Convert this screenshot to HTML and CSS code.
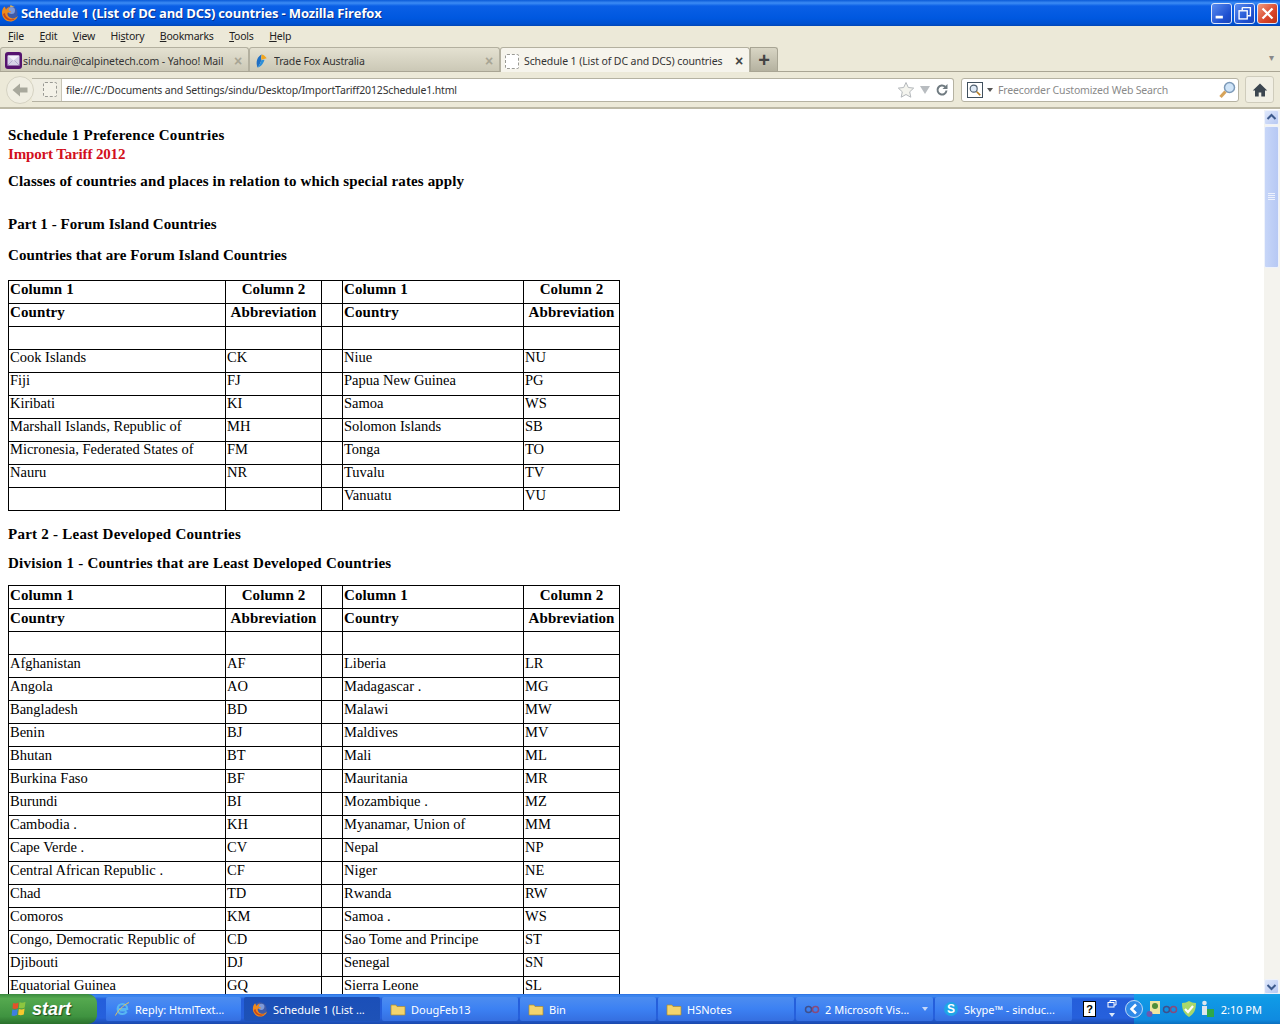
FILE: index.html
```html
<!DOCTYPE html>
<html lang="en">
<head>
<meta charset="utf-8">
<title>Schedule 1 (List of DC and DCS) countries - Mozilla Firefox</title>
<link rel="stylesheet" href="styles.css">
</head>
<body>
<div class="window">
  <header class="titlebar">
    <svg class="title-icon" viewBox="0 0 18 18" width="18" height="18"><circle cx="9" cy="9" r="7.500" fill="#3e5aa8"/><circle cx="10.500" cy="6.500" r="3.500" fill="#7f9ad8"/><path d="M3.500 2.500C1.500 4.500.8 7 1 9.500c.4 4.500 4 8 8.300 8 3.800 0 6.800-2.500 7.700-6-1.500 2.200-4.500 3.500-7 2.600C7.500 13.300 6 11 6.500 9c1-1 2.500-1 3.500-.5.200-1.200-1-2-2.500-2 0-1.500.5-2.800 2-3.800-2 .2-3.700 1.300-4.500 3-.5-1-.8-2.200-1.500-3.200z" fill="#ee8a1d"/><path d="M2 10c.8 3.500 3.800 6.500 7.500 6.500 2 0 3.800-.8 5-2-2.500 1.200-5.500 1-7.500-.5C5.200 12.700 4 11 4 9z" fill="#c9471a"/><path d="M9 1.500c2 0 3.500.5 5 1.700-1.500-.5-3-.5-4.500 0z" fill="#f6c24a"/></svg>
    <span class="title-text">Schedule 1 (List of DC and DCS) countries - Mozilla Firefox</span>
    <div class="winbtns">
      <span class="winbtn"><svg viewBox="0 0 21 21" width="19" height="19"><rect x="4" y="13" width="8" height="3" fill="#fff"/></svg></span>
      <span class="winbtn"><svg viewBox="0 0 21 21" width="19" height="19"><path d="M8 4h9v9h-3M8 4v3" fill="none" stroke="#fff" stroke-width="1.5"/><rect x="4.500" y="7.500" width="9" height="9" fill="none" stroke="#fff" stroke-width="1.500"/></svg></span>
      <span class="winbtn winbtn-close"><svg viewBox="0 0 21 21" width="19" height="19"><path d="M5 5l11 11M16 5L5 16" stroke="#fff" stroke-width="2.500"/></svg></span>
    </div>
  </header>

  <nav class="menubar">
    <span><u>F</u>ile</span><span><u>E</u>dit</span><span><u>V</u>iew</span><span>Hi<u>s</u>tory</span><span><u>B</u>ookmarks</span><span><u>T</u>ools</span><span><u>H</u>elp</span>
  </nav>

  <div class="tabbar">
    <div class="tab tab-one">
      <svg viewBox="0 0 17 17" width="17" height="17"><rect x="0" y="0" width="17" height="17" rx="3" fill="#55136e"/><rect x="2.500" y="3.500" width="12" height="10" rx="1" fill="#d6d2e8"/><path d="M2.500 3.500l6 5 6-5z" fill="#f4f2fa"/><path d="M2.500 13.500l5-5M14.500 13.500l-5-5" stroke="#a49cc4" stroke-width=".8"/></svg>
      <span class="tab-label">sindu.nair@calpinetech.com - Yahoo! Mail</span><span class="tab-x tab-x-dim">×</span>
    </div>
    <div class="tab tab-two">
      <svg viewBox="0 0 16 18" width="14" height="17"><path d="M9 2C4 4 1.500 10 4 17c1.500-1.500 3.500-5 4.500-8.500C8 6 8 4 9 2z" fill="#1f6fc4"/><path d="M9 2c-.8 2-.8 4-.5 6l6-1.500C13.500 4.500 11.500 2.500 9 2z" fill="#f2a51d"/><path d="M8.500 8.500C7.500 12 5.500 15.500 4 17c4-1 7-5 8-9z" fill="#2d8fd8"/></svg>
      <span class="tab-label">Trade Fox Australia</span><span class="tab-x tab-x-dim">×</span>
    </div>
    <div class="tab tab-active">
      <span class="page-icon"></span>
      <span class="tab-label">Schedule 1 (List of DC and DCS) countries</span><span class="tab-x">×</span>
    </div>
    <div class="tab-new">+</div>
    <span class="tab-list">▾</span>
  </div>

  <div class="navbar">
    <span class="back-btn"><svg viewBox="0 0 20 20" width="20" height="20"><path d="M2.500 10l7.500-6.500V7.500h7.500v5H10v4z" fill="#a8a89c"/></svg></span>
    <div class="urlbar">
      <span class="identity"><span class="page-icon"></span></span>
      <div class="url-field">
        <span class="url-text">file:///C:/Documents and Settings/sindu/Desktop/ImportTariff2012Schedule1.html</span>
        <svg class="star" viewBox="0 0 18 18" width="18" height="18"><path d="M9 1.500l2.300 5 5.400.600-4 3.700 1.100 5.400L9 13.500l-4.800 2.700 1.100-5.400-4-3.700 5.400-.6z" fill="#f4f4ee" stroke="#b4b8bc"/></svg>
        <span class="url-drop"></span>
        <svg class="reload" viewBox="0 0 14 14" width="14" height="14"><path d="M11.500 7.500a4.500 4.500 0 1 1-1.300-3.700" fill="none" stroke="#6f7a80" stroke-width="2"/><path d="M12.500 1v5h-5z" fill="#6f7a80"/></svg>
      </div>
    </div>
    <div class="searchbar">
      <span class="search-engine"><svg viewBox="0 0 16 16" width="14" height="14"><circle cx="6.500" cy="6.500" r="4" fill="#dfeaf6" stroke="#506070" stroke-width="1.300"/><path d="M10 10l4 4" stroke="#b47a1e" stroke-width="2"/></svg></span>
      <span class="search-drop"></span>
      <span class="search-text">Freecorder Customized Web Search</span>
      <svg class="search-go" viewBox="0 0 18 18" width="18" height="18"><circle cx="11.500" cy="6.500" r="5" fill="#cfe4f8" stroke="#7d9ab8" stroke-width="1.500"/><path d="M7.500 10.500L2.500 16" stroke="#d6a35a" stroke-width="3.200"/></svg>
    </div>
    <span class="home-btn"><svg viewBox="0 0 16 16" width="16" height="16"><path d="M8 1.500L.8 8.500h2.200v6h3.700v-4h2.600v4H13v-6h2.200z" fill="#3c4650"/></svg></span>
  </div>

  <div class="viewport">
    <main class="page">
      <p class="h h-first">Schedule 1 Preference Countries</p>
      <p class="h h-red">Import Tariff 2012</p>
      <p class="h h-classes">Classes of countries and places in relation to which special rates apply</p>
      <p class="h h-part1">Part 1 - Forum Island Countries</p>
      <p class="h h-sub1">Countries that are Forum Island Countries</p>
      <table class="tariff">
        <colgroup><col class="c1"><col class="c2"><col class="c3"><col class="c4"><col class="c5"></colgroup>
        <tr class="hd"><td>Column 1</td><td class="ctr">Column 2</td><td></td><td>Column 1</td><td class="ctr">Column 2</td></tr>
        <tr class="hd"><td>Country</td><td class="ctr">Abbreviation</td><td></td><td>Country</td><td class="ctr">Abbreviation</td></tr>
        <tr><td></td><td></td><td></td><td></td><td></td></tr>
        <tr><td>Cook Islands</td><td>CK</td><td></td><td>Niue</td><td>NU</td></tr>
        <tr><td>Fiji</td><td>FJ</td><td></td><td>Papua New Guinea</td><td>PG</td></tr>
        <tr><td>Kiribati</td><td>KI</td><td></td><td>Samoa</td><td>WS</td></tr>
        <tr><td>Marshall Islands, Republic of</td><td>MH</td><td></td><td>Solomon Islands</td><td>SB</td></tr>
        <tr><td>Micronesia, Federated States of</td><td>FM</td><td></td><td>Tonga</td><td>TO</td></tr>
        <tr><td>Nauru</td><td>NR</td><td></td><td>Tuvalu</td><td>TV</td></tr>
        <tr><td></td><td></td><td></td><td>Vanuatu</td><td>VU</td></tr>
      </table>
      <p class="h h-part2">Part 2 - Least Developed Countries</p>
      <p class="h h-sub2">Division 1 - Countries that are Least Developed Countries</p>
      <table class="tariff">
        <colgroup><col class="c1"><col class="c2"><col class="c3"><col class="c4"><col class="c5"></colgroup>
        <tr class="hd"><td>Column 1</td><td class="ctr">Column 2</td><td></td><td>Column 1</td><td class="ctr">Column 2</td></tr>
        <tr class="hd"><td>Country</td><td class="ctr">Abbreviation</td><td></td><td>Country</td><td class="ctr">Abbreviation</td></tr>
        <tr><td></td><td></td><td></td><td></td><td></td></tr>
        <tr><td>Afghanistan</td><td>AF</td><td></td><td>Liberia</td><td>LR</td></tr>
        <tr><td>Angola</td><td>AO</td><td></td><td>Madagascar .</td><td>MG</td></tr>
        <tr><td>Bangladesh</td><td>BD</td><td></td><td>Malawi</td><td>MW</td></tr>
        <tr><td>Benin</td><td>BJ</td><td></td><td>Maldives</td><td>MV</td></tr>
        <tr><td>Bhutan</td><td>BT</td><td></td><td>Mali</td><td>ML</td></tr>
        <tr><td>Burkina Faso</td><td>BF</td><td></td><td>Mauritania</td><td>MR</td></tr>
        <tr><td>Burundi</td><td>BI</td><td></td><td>Mozambique .</td><td>MZ</td></tr>
        <tr><td>Cambodia .</td><td>KH</td><td></td><td>Myanamar, Union of</td><td>MM</td></tr>
        <tr><td>Cape Verde .</td><td>CV</td><td></td><td>Nepal</td><td>NP</td></tr>
        <tr><td>Central African Republic .</td><td>CF</td><td></td><td>Niger</td><td>NE</td></tr>
        <tr><td>Chad</td><td>TD</td><td></td><td>Rwanda</td><td>RW</td></tr>
        <tr><td>Comoros</td><td>KM</td><td></td><td>Samoa .</td><td>WS</td></tr>
        <tr><td>Congo, Democratic Republic of</td><td>CD</td><td></td><td>Sao Tome and Principe</td><td>ST</td></tr>
        <tr><td>Djibouti</td><td>DJ</td><td></td><td>Senegal</td><td>SN</td></tr>
        <tr><td>Equatorial Guinea</td><td>GQ</td><td></td><td>Sierra Leone</td><td>SL</td></tr>
      </table>
    </main>
    <aside class="scrollbar">
      <span class="sb-btn"><svg viewBox="0 0 15 15" width="15" height="15"><path d="M3.500 9l4-4 4 4" fill="none" stroke="#3d5a8c" stroke-width="2"/></svg></span>
      <span class="sb-thumb"><span class="sb-grip"></span></span>
      <span class="sb-fill"></span>
      <span class="sb-btn"><svg viewBox="0 0 15 15" width="15" height="15"><path d="M3.500 6l4 4 4-4" fill="none" stroke="#3d5a8c" stroke-width="2"/></svg></span>
    </aside>
  </div>

  <footer class="taskbar">
    <div class="start">
      <svg viewBox="0 0 18 18" width="18" height="18"><path d="M3 3c2 .8 3.500.5 5.500-.5L8 8c-2 1-3.500 1.200-5.500.5z" fill="#e4512a"/><path d="M9.500 2.200c2 .8 4 .6 6-.4l-.8 5.700c-2 1-4 1.100-5.900.4z" fill="#8cc63f"/><path d="M2.300 9.600c2 .7 3.500.5 5.500-.5l-.7 6c-2 1-3.500 1-5.500.3z" fill="#3f7fe0"/><path d="M8.800 9c2 .7 4 .6 5.800-.4l-.8 5.800c-2 1-3.800 1-5.700.4z" fill="#f8c82e"/></svg>
      <span class="start-text">start</span>
    </div>
    <div class="task task-reply">
      <svg viewBox="0 0 16 16" width="16" height="16"><path d="M12.500 9.500H6M4 8h9.200c0-3-2.200-5-4.700-5S3.700 5 3.700 8s2 5 4.700 5c2 0 3.400-.9 4.300-2.500" fill="none" stroke="#58b6f2" stroke-width="2.200"/><path d="M1.500 14.500C3 11 9 4 15 1.500" fill="none" stroke="#e6c25a" stroke-width="1"/></svg>
      <span class="task-label">Reply: HtmlText...</span>
    </div>
    <div class="task task-active task-sched">
      <svg viewBox="0 0 18 18" width="16" height="16"><circle cx="9" cy="9" r="7.500" fill="#3e5aa8"/><circle cx="10.500" cy="6.500" r="3.500" fill="#7f9ad8"/><path d="M3.500 2.500C1.500 4.500.8 7 1 9.500c.4 4.500 4 8 8.300 8 3.800 0 6.800-2.500 7.700-6-1.500 2.200-4.500 3.500-7 2.600C7.500 13.300 6 11 6.500 9c1-1 2.500-1 3.500-.5.200-1.200-1-2-2.500-2 0-1.500.5-2.800 2-3.800-2 .2-3.700 1.300-4.500 3-.5-1-.8-2.200-1.500-3.200z" fill="#ee8a1d"/><path d="M2 10c.8 3.500 3.800 6.500 7.500 6.500 2 0 3.800-.8 5-2-2.500 1.200-5.500 1-7.500-.5C5.200 12.700 4 11 4 9z" fill="#c9471a"/></svg>
      <span class="task-label">Schedule 1 (List ...</span>
    </div>
    <div class="task task-doug">
      <svg viewBox="0 0 16 16" width="16" height="16"><path d="M1 4h5l1 1.500h8V14H1z" fill="#f3d46e" stroke="#b08d2c" stroke-width=".7"/></svg>
      <span class="task-label">DougFeb13</span>
    </div>
    <div class="task task-bin">
      <svg viewBox="0 0 16 16" width="16" height="16"><path d="M1 4h5l1 1.500h8V14H1z" fill="#f3d46e" stroke="#b08d2c" stroke-width=".7"/></svg>
      <span class="task-label">Bin</span>
    </div>
    <div class="task task-hs">
      <svg viewBox="0 0 16 16" width="16" height="16"><path d="M1 4h5l1 1.500h8V14H1z" fill="#f3d46e" stroke="#b08d2c" stroke-width=".7"/></svg>
      <span class="task-label">HSNotes</span>
    </div>
    <div class="task task-vis">
      <svg viewBox="0 0 16 16" width="16" height="16"><circle cx="4.500" cy="8.500" r="3" fill="none" stroke="#3f4f8a" stroke-width="1.500"/><circle cx="11.500" cy="8.500" r="3" fill="none" stroke="#8a4a7a" stroke-width="1.500"/></svg>
      <span class="task-label">2 Microsoft Vis...</span>
      <span class="task-arrow"></span>
    </div>
    <div class="task task-skype">
      <svg viewBox="0 0 16 16" width="16" height="16"><circle cx="8" cy="8" r="7" fill="#1fa5e6"/><text class="skype-s" x="8" y="12" text-anchor="middle">S</text></svg>
      <span class="task-label">Skype™ - sinduc...</span>
    </div>
    <div class="quick">
      <span class="help-ico">?</span>
      <span class="quick-toggle"><svg viewBox="0 0 12 22" width="12" height="22"><path d="M4 2.500h6v4.500H8M4 2.500v1.500" fill="none" stroke="#fff"/><rect x="2" y="4.500" width="6" height="4.500" fill="none" stroke="#fff"/><path d="M3 15h6l-3 4z" fill="#dbe8fb"/></svg></span>
    </div>
    <div class="tray">
      <span class="tray-chev"><svg viewBox="0 0 18 18" width="18" height="18"><circle cx="9" cy="9" r="8.500" fill="#2f8ae8" stroke="#bcd8f8"/><path d="M11 4.500L6.500 9l4.500 4.500" fill="none" stroke="#fff" stroke-width="2.500"/></svg></span>
      <svg viewBox="0 0 16 18" width="16" height="18"><rect x="4" y="1" width="10" height="13" fill="#efe6a0"/><circle cx="9" cy="6" r="3" fill="#4f8f3a"/><circle cx="3.500" cy="14" r="3" fill="#6a5ab0"/></svg>
      <svg viewBox="0 0 16 16" width="16" height="16"><circle cx="4.500" cy="8.500" r="3" fill="none" stroke="#3f4f8a" stroke-width="1.500"/><circle cx="11.500" cy="8.500" r="3" fill="none" stroke="#8a4a7a" stroke-width="1.500"/></svg>
      <svg class="tray-shield" viewBox="0 0 18 18" width="18" height="18"><path d="M2 3c3 0 5-1 7-2 2 1 4 2 7 2 0 7-2 11-7 14C4 14 2 10 2 3z" fill="#a9d86a"/><path d="M5 9l3 3 5-6" fill="none" stroke="#fff" stroke-width="2.200"/></svg>
      <svg class="tray-user" viewBox="0 0 14 18" width="14" height="18"><circle cx="4.500" cy="3" r="2.300" fill="#dde6ee"/><rect x="2" y="6" width="5" height="9" fill="#dde6ee"/><rect x="7" y="9" width="7" height="8" fill="#2ea84a"/></svg>
      <span class="clock">2:10 PM</span>
    </div>
  </footer>
</div>
</body>
</html>
```
FILE: styles.css
```css
* { box-sizing: border-box; }
html, body { margin: 0; padding: 0; height: 100%; overflow: hidden; }
.window { width: 1280px; height: 1024px; display: flex; flex-direction: column; background: #ece9d8; font-family: "Noto Sans", "Liberation Sans", sans-serif; font-size: 10.500px; letter-spacing: -.16px; color: #111; }

.titlebar { height: 26px; flex: none; display: flex; align-items: center; padding: 0 2px 0 1px; background: linear-gradient(#0a5ad8 0, #3c8cf4 3px, #0a5fe6 6px, #0058e0 18px, #0050d0 24px, #0346b4 26px); }
.title-icon { flex: none; }
.title-text { margin-left: 2px; color: #fff; font: bold 13px "Open Sans", "Liberation Sans", sans-serif; letter-spacing: -.16px; text-shadow: 1px 1px 0 #0a2f8c; white-space: nowrap; }
.winbtns { margin-left: auto; display: flex; gap: 2px; }
.winbtn { width: 21px; height: 21px; display: flex; align-items: center; justify-content: center; border: 1px solid #dfe8fa; border-radius: 3px; background: linear-gradient(135deg, #5a8cf0, #1d4fd0 70%, #1a45b8); }
.winbtn-close { background: linear-gradient(135deg, #ef9a7e, #d9452a 60%, #bb3115); }

.menubar { height: 22px; flex: none; display: flex; align-items: center; padding: 0 0 2px 8px; gap: 15.500px; color: #222; letter-spacing: -.22px; }
.menubar u { text-decoration: underline; }

.tabbar { height: 24px; flex: none; display: flex; align-items: flex-end; border-bottom: 1px solid #a9a594; position: relative; }
.tab { height: 24px; display: flex; align-items: center; gap: 2px; padding: 2px 4px 0 4px; border: 1px solid #b3b09f; border-bottom: none; border-radius: 3px 3px 0 0; background: linear-gradient(#e4e1d1, #cbc8b6); white-space: nowrap; color: #333; }
.tab-one { width: 249px; letter-spacing: -.12px; }
.tab-one .tab-label { margin-left: -1px; }
.tab-two { width: 251px; }
.tab-two .tab-label { margin-left: 4px; }
.tab-active { width: 250px; height: 25px; margin-bottom: -1px; background: #f6f4ec; position: relative; letter-spacing: -.1px; }
.tab-active .tab-label { margin-left: 3px; }
.tab-label { flex: 1; min-width: 0; overflow: hidden; }
.tab-x { flex: none; font: bold 14px "Liberation Sans", sans-serif; color: #444; width: 12px; text-align: center; }
.tab-x-dim { color: #a8a594; }
.tab-new { width: 28px; height: 24px; display: flex; align-items: center; justify-content: center; border: 1px solid #a8a594; border-bottom: none; border-radius: 0 3px 0 0; background: linear-gradient(#d8d5c4, #b5b2a0); font: bold 20px "Liberation Sans", sans-serif; color: #444; line-height: 1; }
.tab-list { margin-left: auto; margin-right: 6px; margin-bottom: 7px; font-size: 10px; color: #888; }

.page-icon { flex: none; display: inline-block; width: 14px; height: 15px; border: 1px dashed #9a9a94; border-radius: 2px; background: #f4f2e8; }
.tab-active .page-icon { background: #fff; }

.navbar { height: 37px; flex: none; display: flex; align-items: center; padding: 0 6px; border-bottom: 2px solid #bdb9a6; }
.back-btn { flex: none; width: 28px; height: 28px; position: relative; z-index: 1; display: flex; align-items: center; justify-content: center; border-radius: 50%; border: 1px solid #d5d2c2; background: #f0eee2; margin-right: -2px; }
.urlbar { flex: 1; height: 24px; display: flex; align-items: stretch; border: 1px solid #b5b2a2; border-left: none; border-radius: 0 3px 3px 0; }
.identity { flex: none; width: 30px; display: flex; align-items: center; justify-content: center; padding-left: 6px; background: #efede2; border-right: 1px solid #c8c5b6; }
.url-field { flex: 1; min-width: 0; display: flex; align-items: center; padding: 0 3px 0 4px; background: #fff; border-radius: 0 3px 3px 0; }
.url-text { color: #333; white-space: nowrap; flex: 1; }
.star { flex: none; }
.url-drop { width: 0; height: 0; margin: 0 5px; border: 5px solid transparent; border-top: 8px solid #b8bcc0; border-bottom: none; }
.reload { flex: none; margin-right: 1px; }
.searchbar { flex: none; width: 278px; height: 24px; margin-left: 7px; display: flex; align-items: center; padding: 0 2px 0 5px; background: #fff; border: 1px solid #b5b2a2; border-radius: 3px; }
.search-engine { width: 16px; height: 16px; border: 1px solid #40505e; display: flex; align-items: center; justify-content: center; }
.search-drop { width: 0; height: 0; margin: 0 5px 0 4px; border: 3px solid transparent; border-top: 4px solid #555; border-bottom: none; }
.search-text { flex: 1; color: #8a8a8a; white-space: nowrap; }
.home-btn { flex: none; width: 29px; height: 27px; margin-left: 6px; display: flex; align-items: center; justify-content: center; border: 1px solid #cfccbc; border-radius: 3px; background: #f1efe4; }

.viewport { flex: 1; min-height: 0; display: flex; background: #fff; overflow: hidden; }
.page { flex: 1; min-width: 0; padding: 17px 0 0 8px; overflow: hidden; font-family: "Liberation Serif", serif; color: #000; letter-spacing: 0; }
.h { margin: 0; font-weight: bold; font-size: 15px; line-height: 19px; white-space: nowrap; }
.h-first { letter-spacing: .27px; }
.h-red { color: #d2101c; letter-spacing: -.15px; }
.h-classes { margin-top: 8px; letter-spacing: .13px; }
.h-part1 { margin-top: 24px; letter-spacing: .05px; }
.h-sub1 { margin-top: 12px; letter-spacing: .07px; }
.h-part2 { margin-top: 14px; letter-spacing: .25px; }
.h-sub2 { margin-top: 10px; letter-spacing: .24px; }
.tariff { border-collapse: collapse; table-layout: fixed; width: 611px; margin-top: 15px; font-size: 14.500px; line-height: 14px; color: #000; }
.h-sub2 + .tariff { margin-top: 12px; }
.c1 { width: 217px; } .c2 { width: 96px; } .c3 { width: 21px; } .c4 { width: 181px; } .c5 { width: 96px; }
.tariff td { border: 1px solid #000; height: 23px; padding: 0 1px; vertical-align: top; white-space: nowrap; overflow: hidden; }
.h-sub2 + .tariff td { padding-top: 1px; }
.hd td { font-weight: bold; font-size: 15px; line-height: 16px; letter-spacing: .1px; }
.tariff .ctr { text-align: center; }

.scrollbar { flex: none; width: 16px; margin-top: 1px; padding-right: 1px; display: flex; flex-direction: column; gap: 1px; background: #f4f3ee; }
.sb-btn { flex: none; width: 15px; height: 15px; display: block; background: linear-gradient(135deg, #dfe8fb, #b7c8f2); border: 1px solid #eef2fb; border-radius: 2px; }
.sb-btn svg { display: block; margin: -1px; }
.sb-thumb { flex: none; height: 142px; width: 15px; display: flex; align-items: center; justify-content: center; background: linear-gradient(90deg, #c7d6f8, #b6c8f4); border: 1px solid #eef2fb; border-radius: 2px; }
.sb-grip { width: 7px; height: 8px; background: repeating-linear-gradient(#eef2fd 0 1px, transparent 1px 2px); }
.sb-fill { flex: 1; }

.taskbar { height: 30px; flex: none; display: flex; align-items: center; background: linear-gradient(#2a6ee0 0, #3f8cf3 2px, #245edb 5px, #2660dc 24px, #1a49ac 30px); color: #fff; position: relative; letter-spacing: 0; font-size: 11px; }
.start { flex: none; width: 97px; height: 30px; display: flex; align-items: center; gap: 4px; padding-left: 10px; background: linear-gradient(#3a8a3e, #55a94f 15%, #3f9340 75%, #2a702c); border-radius: 0 9px 9px 0; }
.start-text { font: italic bold 18px "Liberation Sans", sans-serif; color: #fff; text-shadow: 1px 1px 1px #1d4d1d; }
.task { flex: none; height: 24px; display: flex; align-items: center; gap: 5px; padding-left: 8px; background: linear-gradient(#4d8df0, #3c81f3 50%, #356fe0); border-radius: 2px; white-space: nowrap; color: #fff; }
.task-label { overflow: hidden; }
.task-active { background: linear-gradient(#1b4fb8, #1e52b7); }
.task-reply { width: 135px; margin-left: 9px; }
.task-sched { width: 136px; margin-left: 3px; }
.task-doug, .task-bin, .task-hs { width: 136px; margin-left: 2px; }
.task-vis, .task-skype { width: 137px; margin-left: 2px; }
.task-arrow { width: 0; height: 0; margin-left: auto; margin-right: 5px; border: 3px solid transparent; border-top: 4px solid #c5d8f8; border-bottom: none; }
.skype-s { font: bold 12px "Liberation Sans", sans-serif; fill: #fff; }
.quick { flex: 1; display: flex; align-items: center; padding-left: 11px; gap: 10px; }
.help-ico { width: 13px; height: 16px; background: #fff; border: 1px solid #000; color: #000; font: bold 11px "Liberation Sans", sans-serif; text-align: center; line-height: 14px; }
.quick-toggle { display: flex; }
.tray { flex: none; width: 146px; height: 30px; display: flex; align-items: center; background: linear-gradient(#1aa0e8, #109ae6 15%, #0f8be0 85%, #0b6fbe); color: #fff; }
.tray-chev { display: flex; margin-right: 3px; margin-left: -9px; }
.tray-shield { margin-left: 2px; }
.tray-user { margin-left: 2px; }
.clock { margin-left: auto; margin-right: 18px; white-space: nowrap; }
```
